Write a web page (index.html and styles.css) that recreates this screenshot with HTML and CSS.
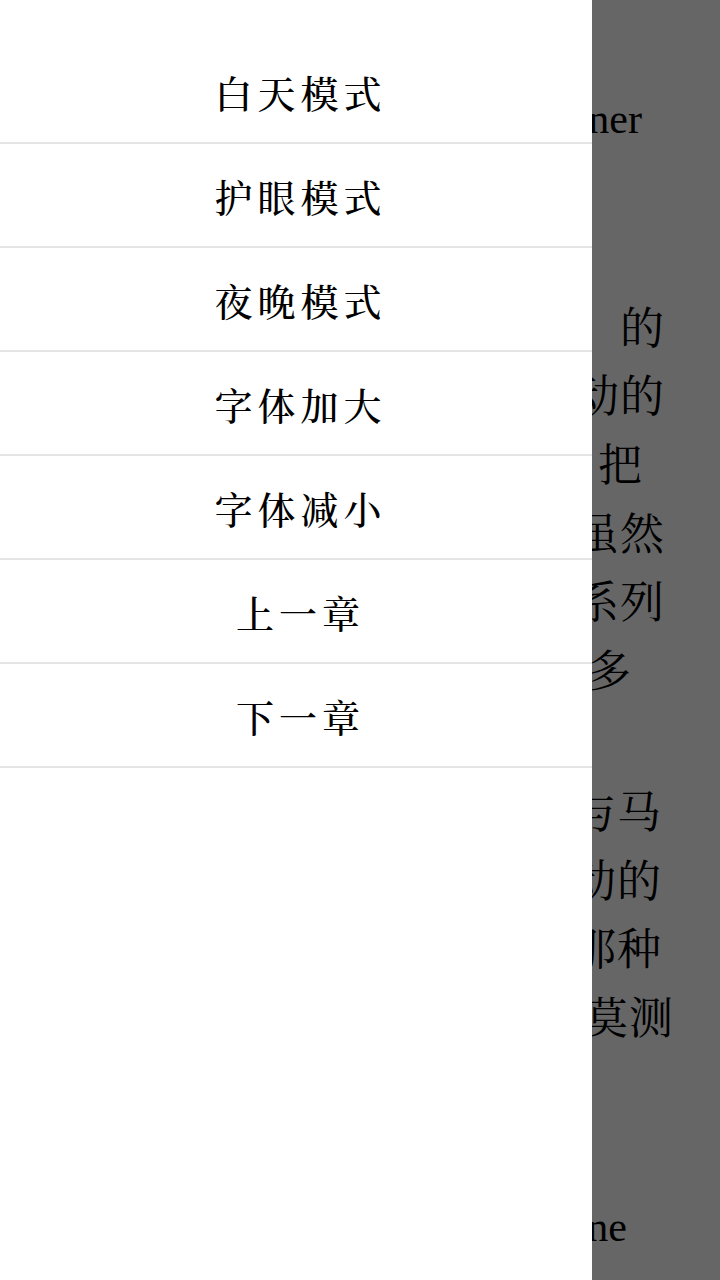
FILE: index.html
```html
<!DOCTYPE html>
<html lang="zh-CN">
<head>
<meta charset="utf-8">
<title>阅读</title>
<link rel="stylesheet" href="styles.css">
</head>
<body>
<main class="reader">
  <div class="text">
    <div class="line latin end-642">Partner</div>
    <div class="line blank"></div>
    <div class="line blank"></div>
    <div class="line">，的</div>
    <div class="line">动的</div>
    <div class="line end-643">，把</div>
    <div class="line">虽然</div>
    <div class="line">系列</div>
    <div class="line end-632">许多</div>
    <div class="line blank"></div>
    <div class="line para2 end-660">与马</div>
    <div class="line end-660">动的</div>
    <div class="line end-660">那种</div>
    <div class="line end-673">莫测</div>
    <div class="line blank"></div>
    <div class="line blank"></div>
    <div class="line latin last end-627">Line</div>
  </div>
</main>
<div class="overlay"></div>
<nav class="drawer">
  <ul class="menu">
    <li class="item">白天模式</li>
    <li class="item">护眼模式</li>
    <li class="item">夜晚模式</li>
    <li class="item">字体加大</li>
    <li class="item">字体减小</li>
    <li class="item">上一章</li>
    <li class="item">下一章</li>
  </ul>
</nav>
</body>
</html>
```

FILE: styles.css
```css
html, body {
  margin: 0;
  padding: 0;
  width: 720px;
  height: 1280px;
  overflow: hidden;
  background: #ffffff;
}

body {
  position: relative;
  font-family: "AR PL UKai CN", "AR PL KaitiM GB", "Noto Serif CJK SC", "Noto Sans CJK SC", sans-serif;
  color: #000;
}

.reader {
  width: 720px;
  height: 1280px;
  background: #ffffff;
}

.text {
  padding-top: 85px;
}

.line {
  height: 68.6px;
  line-height: 68.6px;
  font-size: 44px;
  letter-spacing: 1px;
  white-space: nowrap;
  overflow: hidden;
  text-align: right;
  padding-right: 55px;
  color: #000;
}

.latin {
  font-family: "Liberation Serif", "Times New Roman", serif;
  font-size: 42px;
  letter-spacing: 0;
}

.para2 {
  margin-top: 4px;
}

.last {
  margin-top: 6px;
}

.end-642 { padding-right: 78px; }
.end-643 { padding-right: 77px; }
.end-632 { padding-right: 88px; }
.end-660 { padding-right: 58px; }
.end-673 { padding-right: 46px; }
.end-627 { padding-right: 93px; }

.overlay {
  position: absolute;
  inset: 0;
  background: rgba(0, 0, 0, 0.6);
}

.drawer {
  position: absolute;
  left: 0;
  top: 0;
  width: 592px;
  height: 1280px;
  background: #ffffff;
  padding-top: 40px;
  box-sizing: border-box;
}

.menu {
  list-style: none;
  margin: 0;
  padding: 0;
}

.item {
  height: 102px;
  border-bottom: 2px solid #e4e4e4;
  display: flex;
  align-items: center;
  justify-content: center;
  font-size: 38px;
  font-weight: 500;
  letter-spacing: 5px;
  padding-left: 9px;
  color: #000;
}
```
